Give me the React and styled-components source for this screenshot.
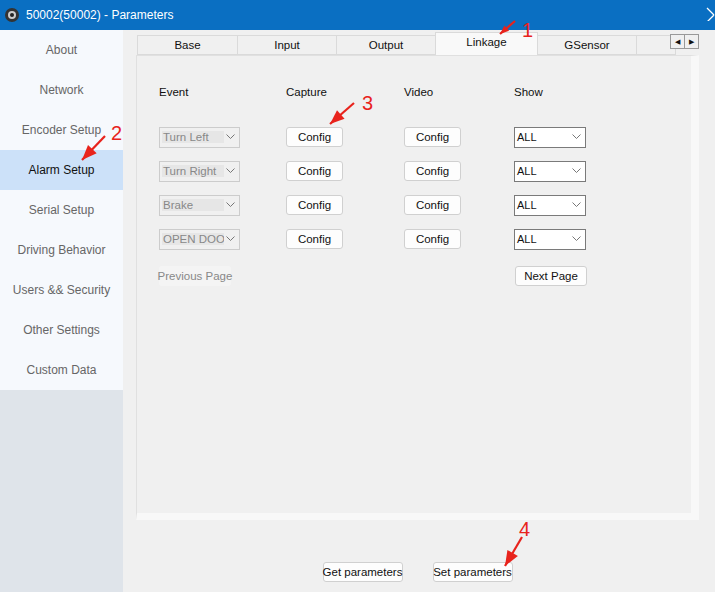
import React from "react";
import styled, { createGlobalStyle } from "styled-components";

const Global = createGlobalStyle`
  html, body { margin: 0; padding: 0; }
  body { font-family: "Liberation Sans", "Noto Sans", sans-serif; font-size: 12px; color: #111; }
`;

const Window = styled.div`
  position: relative;
  width: 715px;
  height: 592px;
  background: #f0f0f0;
  display: flex;
  flex-direction: column;
  overflow: hidden;
`;

const TitleBar = styled.div`
  height: 30px;
  background: #0a6fc2;
  color: #fff;
  display: flex;
  align-items: center;
  padding-left: 4px;
  gap: 6px;
  font-size: 12px;
`;

const Body = styled.div`
  flex: 1;
  display: flex;
`;

const Sidebar = styled.div`
  width: 123px;
  background: #dfe4ea;
  display: flex;
  flex-direction: column;
`;

const NavItem = styled.div`
  height: 40px;
  display: flex;
  align-items: center;
  justify-content: center;
  background: ${p => (p.$active ? "#cce1f9" : "#f6f9fd")};
  color: ${p => (p.$active ? "#111" : "#666")};
  font-size: 12px;
  white-space: nowrap;
`;

const Main = styled.div`
  flex: 1;
  display: flex;
  flex-direction: column;
  padding: 3px 16px 0 13px;
`;

const TabRow = styled.div`
  display: flex;
  align-items: flex-end;
  height: 22px;
  position: relative;
  padding-left: 2px;
`;

const Tab = styled.div`
  width: ${p => p.$w}px;
  height: ${p => (p.$active ? 23 : 20)}px;
  background: ${p => (p.$active ? "#f9f9f9" : "#f0f0f0")};
  border: 1px solid #dadada;
  border-bottom: ${p => (p.$active ? "none" : "1px solid #dadada")};
  box-sizing: border-box;
  display: flex;
  align-items: ${p => (p.$active ? "flex-start" : "center")};
  padding-top: ${p => (p.$active ? "3px" : "0")};
  justify-content: center;
  font-size: 11.5px;
  margin-left: -1px;
`;

const Arrows = styled.div`
  position: absolute;
  right: 0;
  top: 1px;
  display: flex;
`;

const ArrowBtn = styled.div`
  width: 15px;
  height: 15px;
  border: 1px solid #999;
  background: #f0f0f0;
  box-sizing: border-box;
  display: flex;
  align-items: center;
  justify-content: center;
  font-size: 7px;
  margin-left: -1px;
`;

const Panel = styled.div`
  height: 465px;
  background: #f0f0f0;
  border: 1px solid #e0e0e0;
  border-right: 8px solid #f8f8f8;
  border-bottom: 7px solid #f8f8f8;
  box-sizing: border-box;
  padding: 30px 0 0 22px;
`;

const Grid = styled.div`
  display: grid;
  grid-template-columns: 127px 118px 110px 80px;
  grid-auto-rows: 34px;
  align-items: center;
`;

const Head = styled.div`
  font-size: 11.5px;
  align-self: start;
  height: 31px;
`;

const DisabledSelect = styled.div`
  width: 81px;
  height: 21px;
  border: 1px solid #ccc;
  background: #f0f0f0;
  box-sizing: border-box;
  display: flex;
  align-items: center;
  justify-content: space-between;
  padding: 0 4px 0 2px;
  color: #888;
  font-size: 11.5px;
  white-space: nowrap;
  span { background: #e6e6e6; padding: 0 1px; width: 60px; overflow: hidden; }
`;

const Select = styled.div`
  width: 72px;
  height: 21px;
  border: 1px solid #7a7a7a;
  background: #fff;
  box-sizing: border-box;
  display: flex;
  align-items: center;
  justify-content: space-between;
  padding: 0 4px 0 2px;
  font-size: 11px;
`;

const Button = styled.div`
  width: ${p => p.$w || 57}px;
  height: 20px;
  border: 1px solid #d0d0d0;
  border-radius: 3px;
  background: #fdfdfd;
  box-sizing: border-box;
  display: flex;
  align-items: center;
  justify-content: center;
  font-size: 11.5px;
  white-space: nowrap;
  color: ${p => (p.$disabled ? "#888" : "#111")};
  ${p => p.$disabled && "border-color: transparent; background: #f4f4f4;"}
`;

const PagerRow = styled.div`
  display: flex;
  justify-content: space-between;
  width: 428px;
  margin-top: 10px;
`;

const Footer = styled.div`
  flex: 1;
  display: flex;
  align-items: flex-end;
  justify-content: center;
  gap: 30px;
  padding: 0 0 10px 0;
`;

const Mark = styled.svg`
  position: absolute;
  overflow: visible;
  pointer-events: none;
`;

const Chevron = () => (
  <svg width="9" height="6" viewBox="0 0 9 6"><path d="M0.5 0.5L4.5 4.5L8.5 0.5" fill="none" stroke="#777" strokeWidth="1" /></svg>
);

const RedArrow = ({ label, lx, ly, x1, y1, x2, y2 }) => (
  <Mark style={{ left: 0, top: 0 }} width="715" height="592">
    <line x1={x1} y1={y1} x2={x2} y2={y2} stroke="#e8231c" strokeWidth="2.2" />
    <polygon points={`${x2},${y2} ${x2 + (x1 - x2) * 0.45 + (y1 - y2) * 0.18},${y2 + (y1 - y2) * 0.45 - (x1 - x2) * 0.18} ${x2 + (x1 - x2) * 0.45 - (y1 - y2) * 0.18},${y2 + (y1 - y2) * 0.45 + (x1 - x2) * 0.18}`} fill="#e8231c" />
    <text x={lx} y={ly} fill="#e8231c" fontSize="20" fontFamily="Liberation Sans, sans-serif">{label}</text>
  </Mark>
);

const nav = ["About", "Network", "Encoder Setup", "Alarm Setup", "Serial Setup", "Driving Behavior", "Users && Security", "Other Settings", "Custom Data"];
const tabs = [["Base", 101], ["Input", 100], ["Output", 100], ["Linkage", 103], ["GSensor", 100], ["", 40]];
const events = ["Turn Left", "Turn Right", "Brake", "OPEN DOOR"];

export default function App() {
  return (
    <Window>
      <Global />
      <TitleBar>
        <svg width="16" height="16" viewBox="0 0 16 16"><circle cx="8" cy="8" r="7" fill="#333" /><circle cx="8" cy="8" r="4" fill="#ccc" /><circle cx="8" cy="8" r="2" fill="#222" /></svg>
        <span>50002(50002) - Parameters</span>
        <svg style={{ position: "absolute", right: 0, top: 7 }} width="10" height="14" viewBox="0 0 10 14"><path d="M2 1L9 8M2 15L9 8" stroke="#fff" strokeWidth="1.3" /></svg>
      </TitleBar>
      <Body>
        <Sidebar>
          {nav.map(n => <NavItem key={n} $active={n === "Alarm Setup"}>{n}</NavItem>)}
        </Sidebar>
        <Main>
          <TabRow>
            {tabs.map(([t, w]) => <Tab key={t + w} $w={w} $active={t === "Linkage"}>{t}</Tab>)}
            <Arrows><ArrowBtn>◀</ArrowBtn><ArrowBtn>▶</ArrowBtn></Arrows>
          </TabRow>
          <Panel>
            <Grid>
              <Head>Event</Head><Head>Capture</Head><Head>Video</Head><Head>Show</Head>
              {events.map(e => (
                <React.Fragment key={e}>
                  <DisabledSelect><span>{e}</span><Chevron /></DisabledSelect>
                  <Button>Config</Button>
                  <Button>Config</Button>
                  <Select>ALL<Chevron /></Select>
                </React.Fragment>
              ))}
            </Grid>
            <PagerRow>
              <Button $w={72} $disabled>Previous Page</Button>
              <Button $w={72}>Next Page</Button>
            </PagerRow>
          </Panel>
          <Footer>
            <Button $w={80}>Get parameters</Button>
            <Button $w={80}>Set parameters</Button>
          </Footer>
        </Main>
      </Body>
      <RedArrow x1={515} y1={21} x2={500} y2={34} lx={522} ly={37} label="1" />
      <RedArrow x1={105} y1={136} x2={82} y2={160} lx={111} ly={140} label="2" />
      <RedArrow x1={354} y1={103} x2={330} y2={124} lx={362} ly={110} label="3" />
      <RedArrow x1={522} y1={537} x2={505} y2={566} lx={519} ly={536} label="4" />
    </Window>
  );
}
